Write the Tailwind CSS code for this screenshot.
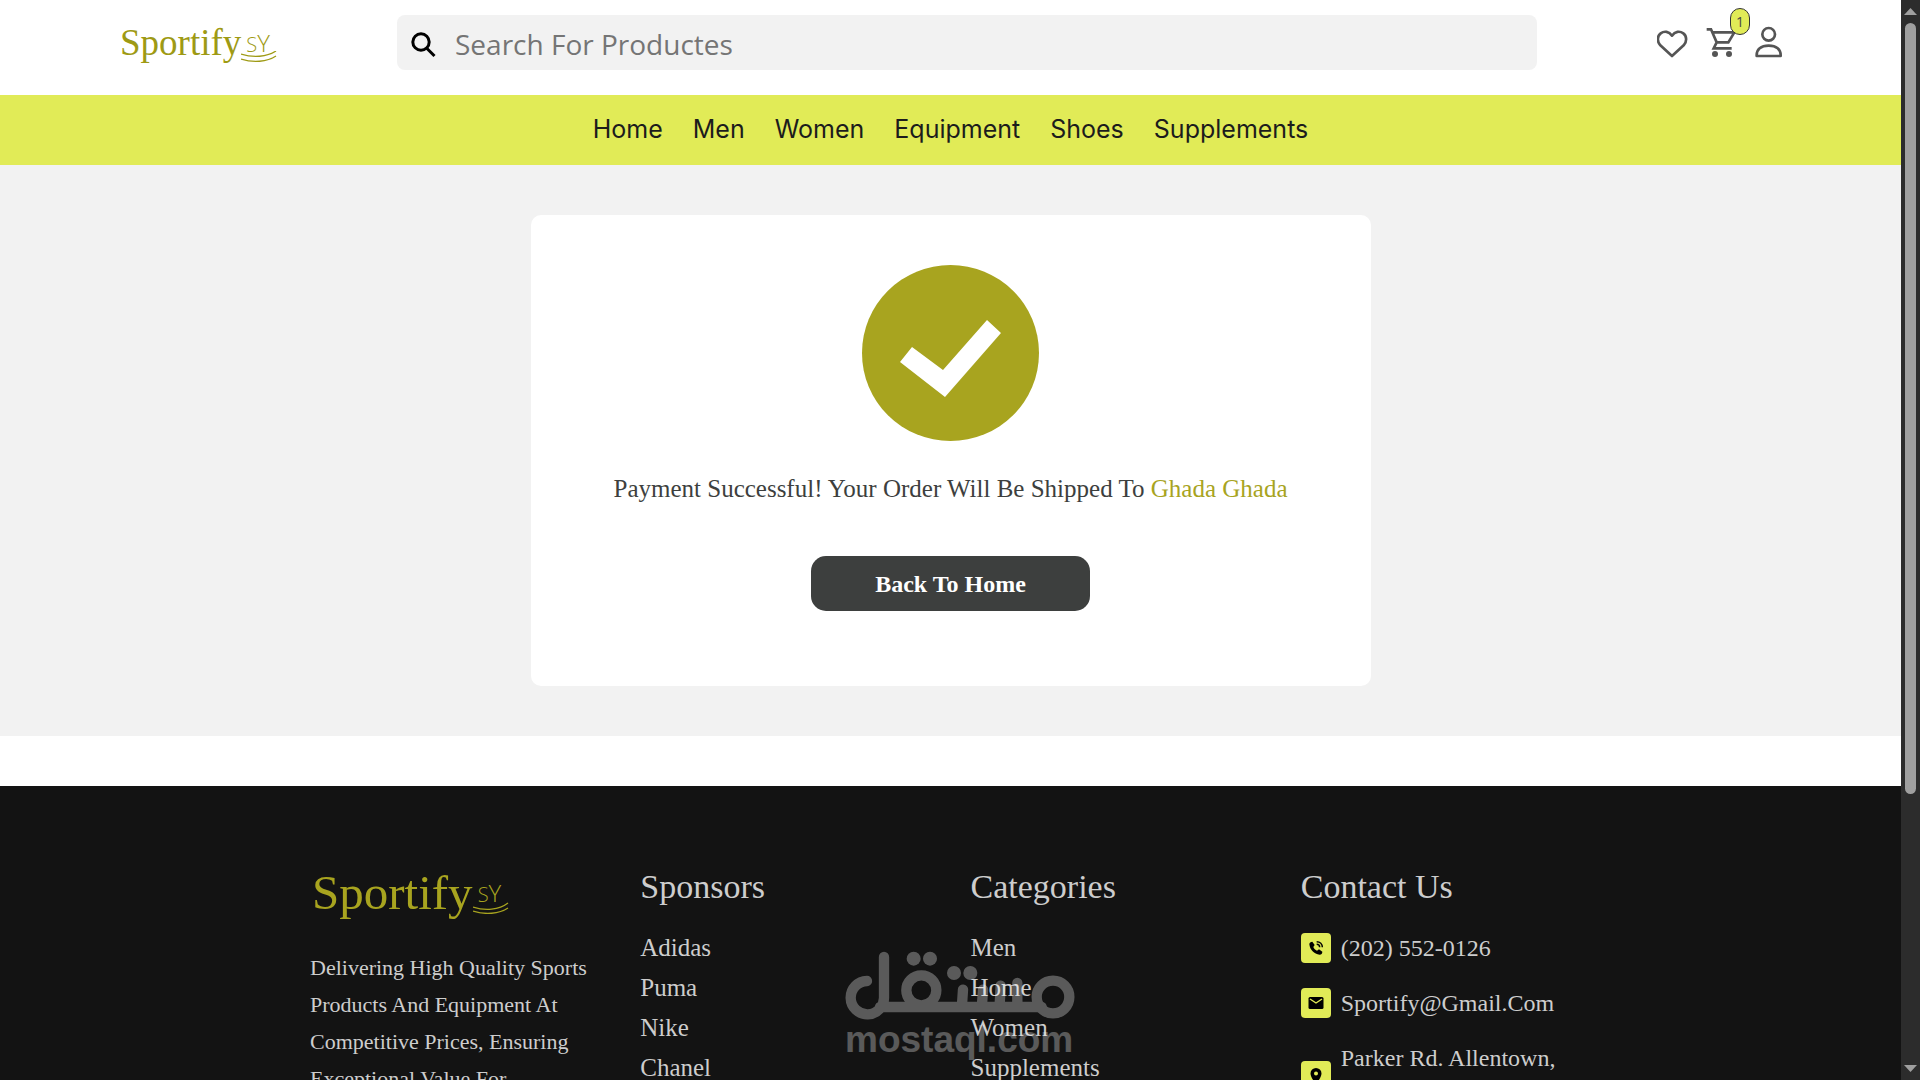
<!DOCTYPE html>
<html lang="en">
<head>
<meta charset="utf-8">
<title>Sportify</title>
<script src="https://cdn.jsdelivr.net/npm/@tailwindcss/browser@4"></script>
</head>
<body class="relative flex h-screen overflow-hidden bg-white">
<div class="min-w-0 flex-1 overflow-hidden">
  <header class="flex h-[95px] items-start px-[118px] pt-[15px]">
    <a href="#" aria-label="Sportify SY" class="flex w-[279px] shrink-0 font-['Liberation_Serif',serif] text-[37px] leading-[56px] text-[#9e9a14]">
      <span class="pl-0.5">Sportify</span>
      <span class="relative flex items-baseline pl-[5px] font-['Open_Sans',sans-serif] font-light">
        <span class="text-[20px]">S</span><span class="text-[24px]">Y</span>
        <svg class="absolute top-[36px] left-0 h-3 w-9" viewBox="0 0 36 12" fill="none" stroke="currentColor" stroke-width="1.3"><path d="M0 3C12 7 26 6 35 0M0 8C12 12 26 11 35 5"/></svg>
      </span>
    </a>
    <label class="flex h-[55px] min-w-0 flex-1 items-center rounded-lg bg-[#f2f2f2] pt-0.5 pl-[14px]">
      <svg class="h-7 w-7 shrink-0" viewBox="0 0 28 28" fill="none" stroke="#000" stroke-width="3"><circle cx="10" cy="12" r="8.2"/><path d="M15.500 18L23.500 26"/></svg>
      <input type="text" aria-label="Search" placeholder="Search For Productes" class="ml-4 min-w-0 flex-1 bg-transparent font-['Open_Sans',sans-serif] text-[28px] leading-[38px] outline-none placeholder:text-[#757575]">
    </label>
    <div class="flex w-[246px] shrink-0 items-start justify-end gap-[17px] pt-[10px] text-[#555]">
      <button type="button" aria-label="Wishlist"><svg class="h-9 w-8" viewBox="48 75 96 108" fill="none" stroke="currentColor" stroke-width="8" stroke-linejoin="round"><path d="M93 168L58 136C48 125 48 108 59 100C70 92 84 94 93 107C102 94 116 92 127 100C138 108 138 125 128 136Z"/></svg></button>
      <button type="button" aria-label="Cart" class="relative"><svg class="h-9 w-8" viewBox="198 75 96 108" fill="none" stroke="currentColor" stroke-width="8"><path d="M200 88H213L230 127H265L283 97H217M230 127L221 145H275"/><g fill="currentColor" stroke="none"><circle cx="225" cy="162" r="9"/><circle cx="267" cy="162" r="9"/></g></svg>
        <span class="absolute -top-[17px] left-6 flex h-[27px] w-5 items-center justify-center rounded-[10px] border border-[#333] bg-[#e1eb57] font-['Open_Sans',sans-serif] text-sm text-[#444]">1</span></button>
      <button type="button" aria-label="Account"><svg class="h-9 w-7" viewBox="343 75 84 108" fill="none" stroke="currentColor" stroke-width="8"><circle cx="384" cy="103" r="19"/><path d="M348 168C347 148 361 137 384 137S421 148 420 168Z" stroke-linejoin="round"/></svg></button>
    </div>
  </header>
  <nav class="flex h-[70px] items-center justify-center gap-[30px] bg-[#e1eb57] font-['Inter',sans-serif] text-[25px] text-[#1c1c1c]">
    <a href="#">Home</a><a href="#">Men</a><a href="#">Women</a><a href="#">Equipment</a><a href="#">Shoes</a><a href="#">Supplements</a>
  </nav>
  <main class="flex justify-center bg-[#f2f2f2] py-[50px]">
    <section class="flex w-[840px] flex-col items-center rounded-[10px] bg-white pt-[50px] pb-[75px] font-['Liberation_Serif',serif]">
      <svg class="h-44 w-[177px]" viewBox="0 0 177 176"><ellipse cx="88.500" cy="88" rx="88.500" ry="88" fill="#a8a41f"/><path d="M38 97L50 82L81 105L125 55L139 68L83 132Z" fill="#fff"/></svg>
      <p class="mt-[30px] text-[25px] leading-[35px] text-[#3d3f3e]">Payment Successful! Your Order Will Be Shipped To <span class="text-[#a8a41f]">Ghada Ghada</span></p>
      <button type="button" class="mt-[50px] h-[55px] w-[279px] rounded-[15px] bg-[#3d3f3e] text-[24px] font-bold text-white">Back To Home</button>
    </section>
  </main>
  <footer class="mt-[50px] grid min-h-[400px] grid-cols-4 gap-10 bg-[#131313] px-[310px] pt-20 font-['Liberation_Serif',serif] text-[#cdcdcd]">
    <div>
      <a href="#" aria-label="Sportify SY" class="flex text-[49px] leading-[54px] text-[#a8a41f]">
        <span class="pl-0.5">Sportify</span>
        <span class="relative flex items-baseline pl-[5px] font-['Open_Sans',sans-serif] font-light">
          <span class="text-[20px]">S</span><span class="text-[24px]">Y</span>
          <svg class="absolute top-[36px] left-0 h-3 w-9" viewBox="0 0 36 12" fill="none" stroke="currentColor" stroke-width="1.3"><path d="M0 5C12 9 26 8 35 1M0 9C12 13 26 12 35 6"/></svg>
        </span>
      </a>
      <p class="mt-[27px] text-[22px] leading-[37px]">Delivering High Quality Sports Products And Equipment At Competitive Prices, Ensuring Exceptional Value For</p>
    </div>
    <div>
      <h2 class="text-[34px] leading-[42px]">Sponsors</h2>
      <ul class="mt-5 text-[25px] leading-10">
        <li><a href="#">Adidas</a></li><li><a href="#">Puma</a></li><li><a href="#">Nike</a></li><li><a href="#">Chanel</a></li>
      </ul>
    </div>
    <div>
      <h2 class="text-[34px] leading-[42px]">Categories</h2>
      <ul class="mt-5 text-[25px] leading-10">
        <li><a href="#">Men</a></li><li><a href="#">Home</a></li><li><a href="#">Women</a></li><li><a href="#">Supplements</a></li>
      </ul>
    </div>
    <div>
      <h2 class="text-[34px] leading-[42px]">Contact Us</h2>
      <ul class="mt-[22px] flex flex-col gap-[19px] text-[24px] leading-9">
        <li class="flex items-center gap-[10px]"><span class="flex h-[30px] w-[30px] items-center justify-center rounded bg-[#e1eb57]"><svg class="h-4 w-4" viewBox="0 0 24 24"><path d="M6.500 2.500L10 7.500L8 10.500C9 13 11 15 13.500 16L16.500 14L21.500 17.500C21.500 20 20 22 17.500 22C9 21 3 15 2 6.500C2 4 4 2.500 6.500 2.500Z"/><path d="M13 2.500C18 2.500 21.500 6 21.500 11M13 6.500C15.800 6.500 17.500 8.200 17.500 11" fill="none" stroke="#000" stroke-width="2.200"/></svg></span>(202) 552-0126</li>
        <li class="flex items-center gap-[10px]"><span class="flex h-[30px] w-[30px] items-center justify-center rounded bg-[#e1eb57]"><svg class="h-4 w-4" viewBox="0 0 16 16"><rect x=".5" y="2" width="15" height="12" rx="1.500"/><path d="M2 4L8 8L14 4" fill="none" stroke="#e1eb57" stroke-width="1.400"/></svg></span>Sportify@Gmail.Com</li>
        <li class="flex min-h-[72px] gap-[10px]"><span class="flex h-[30px] w-[30px] shrink-0 items-center justify-center self-center rounded bg-[#e1eb57]"><svg class="h-4 w-4" viewBox="0 0 16 16"><path fill-rule="evenodd" d="M8 0A5.500 5.500 0 0 0 2.500 5.500C2.500 9.500 8 16 8 16S13.500 9.500 13.500 5.500A5.500 5.500 0 0 0 8 0ZM8 3.500A2 2 0 1 1 8 7.500A2 2 0 0 1 8 3.500Z"/></svg></span>Parker Rd. Allentown,</li>
      </ul>
    </div>
  </footer>
</div>

<!-- scrollbar -->
<div class="flex w-[19px] shrink-0 flex-col items-center bg-[#2c2c2c] py-2" aria-hidden="true">
  <svg class="h-[7px] w-[13px] shrink-0" viewBox="0 0 13 7" fill="#9f9f9f"><path d="M6.500 0L13 7H0Z"/></svg>
  <div class="min-h-0 w-full flex-1 px-1 pt-2"><div class="h-[74%] rounded-full bg-[#9f9f9f]"></div></div>
  <svg class="h-[7px] w-[13px] shrink-0" viewBox="0 0 13 7" fill="#9f9f9f"><path d="M0 0H13L6.500 7Z"/></svg>
</div>

<!-- watermark -->
<div class="pointer-events-none absolute bottom-[20px] left-[845px] flex w-[230px] flex-col text-white opacity-30">
  <svg role="img" aria-label="مستقل" class="h-[69px] w-[230px]" viewBox="75 304 690 207" fill="none" stroke="currentColor" stroke-width="31" stroke-linecap="round">
    <circle cx="699" cy="442" r="49"/>
    <path d="M180 472H665M192 322V442A50 50 0 1 1 141 394"/>
    <circle cx="304" cy="422" r="45"/>
    <path d="M429 420L426 465M489 420L486 465M542 408L539 465M592 400V465"/>
    <g fill="currentColor" stroke="none"><circle cx="281" cy="327" r="21"/><circle cx="330" cy="327" r="21"/><circle cx="402" cy="370" r="21"/><circle cx="451" cy="370" r="21"/></g>
  </svg>
  <span class="font-['Liberation_Sans',sans-serif] text-[37px] leading-[40px] font-bold">mostaql.com</span>
</div>
</body>
</html>
